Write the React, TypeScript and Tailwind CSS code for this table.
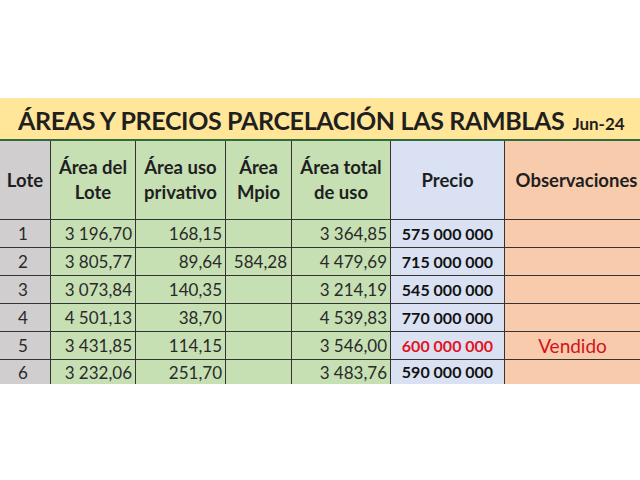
const rows = [
  { lote: "1", area: "3 196,70", privado: "168,15", mpio: "", total: "3 364,85", precio: "575 000 000", obs: "" },
  { lote: "2", area: "3 805,77", privado: "89,64", mpio: "584,28", total: "4 479,69", precio: "715 000 000", obs: "" },
  { lote: "3", area: "3 073,84", privado: "140,35", mpio: "", total: "3 214,19", precio: "545 000 000", obs: "" },
  { lote: "4", area: "4 501,13", privado: "38,70", mpio: "", total: "4 539,83", precio: "770 000 000", obs: "" },
  { lote: "5", area: "3 431,85", privado: "114,15", mpio: "", total: "3 546,00", precio: "600 000 000", obs: "Vendido" },
  { lote: "6", area: "3 232,06", privado: "251,70", mpio: "", total: "3 483,76", precio: "590 000 000", obs: "" },
];

const cols = "grid grid-cols-[51px_85px_90px_66px_99px_114px_135px]";

export default function App() {
  return (
    <div className="w-[640px] h-[480px] bg-white overflow-hidden font-['Lato','Liberation_Sans',sans-serif] text-[#1f1f1f]">
      <div className="h-[98px]" />
      <div className="h-[41px] bg-[#ffe699] flex items-end pl-[18px] pb-[6px] gap-[8px] whitespace-nowrap">
        <span className="text-[25px] leading-none font-bold tracking-[-0.35px]">
          ÁREAS Y PRECIOS PARCELACIÓN LAS RAMBLAS
        </span>
        <span className="text-[17px] leading-none font-bold mb-[1px]">Jun-24</span>
      </div>
      <div className="h-[2px] bg-[#2f6b3c]" />

      <div className={`${cols} h-[79px] border-b border-[#333] text-[18.5px] font-bold leading-[25px] text-center`}>
        <div className="bg-[#d0cece] border-r border-[#333] flex items-center justify-center">Lote</div>
        <div className="bg-[#c6e0b4] border-r border-[#333] flex items-center justify-center">Área del<br />Lote</div>
        <div className="bg-[#c6e0b4] border-r border-[#333] flex items-center justify-center">Área uso<br />privativo</div>
        <div className="bg-[#c6e0b4] border-r border-[#333] flex items-center justify-center">Área<br />Mpio</div>
        <div className="bg-[#c6e0b4] border-r border-[#333] flex items-center justify-center">Área total<br />de uso</div>
        <div className="bg-[#d9e1f2] border-r border-[#333] flex items-center justify-center">Precio</div>
        <div className="bg-[#f8cbad] flex items-center justify-center pl-[8px]">Observaciones</div>
      </div>

      {rows.map((r, i) => (
        <div
          key={r.lote}
          className={`${cols} ${i < rows.length - 1 ? "h-[28px] border-b border-[#333]" : "h-[24px]"} text-[17px] leading-none text-[#2a2a2a]`}
        >
          <div className="bg-[#d0cece] border-r border-[#333] flex items-center justify-center pr-[4px]">{r.lote}</div>
          <div className="bg-[#c6e0b4] border-r border-[#333] flex items-center justify-end pr-[3px]">{r.area}</div>
          <div className="bg-[#c6e0b4] border-r border-[#333] flex items-center justify-end pr-[3px]">{r.privado}</div>
          <div className="bg-[#c6e0b4] border-r border-[#333] flex items-center justify-end pr-[4px]">{r.mpio}</div>
          <div className="bg-[#c6e0b4] border-r border-[#333] flex items-center justify-end pr-[3px]">{r.total}</div>
          <div
            className={`bg-[#d9e1f2] border-r border-[#333] flex items-center justify-center text-[16px] font-bold ${
              r.obs ? "text-[#e0141e]" : "text-[#111]"
            }`}
          >
            {r.precio}
          </div>
          <div className="bg-[#f8cbad] flex items-center justify-center text-[#d0141c] text-[19px]">{r.obs}</div>
        </div>
      ))}
    </div>
  );
}
